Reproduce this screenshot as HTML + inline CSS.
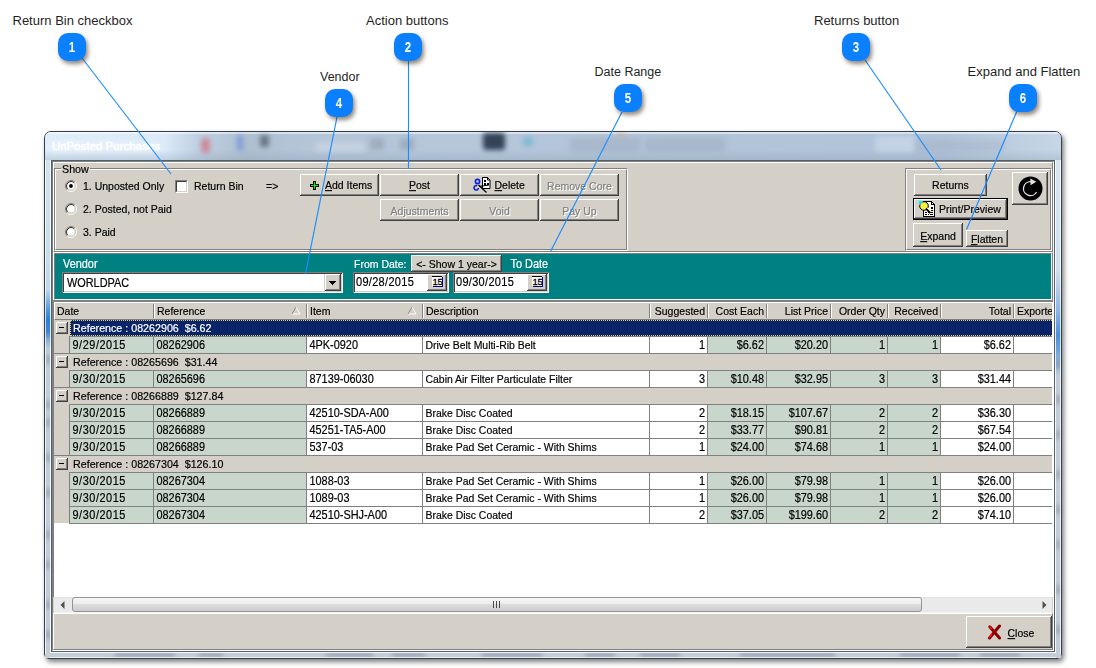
<!DOCTYPE html><html><head><meta charset="utf-8"><style>
html,body{margin:0;padding:0}
body{width:1096px;height:668px;background:#fff;position:relative;overflow:hidden;font-family:"Liberation Sans",sans-serif}
div,svg{position:absolute;box-sizing:border-box}
.t{white-space:pre}
.s{-webkit-text-stroke:0.18px currentColor}
</style></head><body>
<div style="left:44px;top:131px;width:1018px;height:528px;border-radius:7px 7px 5px 5px;box-shadow:2px 3px 5px rgba(0,0,0,0.5)"></div>
<div style="left:44px;top:131px;width:1018px;height:528px;border:1px solid #36404a;border-radius:7px 7px 5px 5px;background:linear-gradient(180deg,#d6e4f2 0px,#bdd0e4 28px,#c8d9ea 200px,#c4d6e8 100%);overflow:hidden"></div>
<div style="left:45px;top:160px;width:6px;height:493px;background:linear-gradient(180deg,#d2e2f0 0px,#c8dcea 100px,#c0d6ea 130px,#5a9ee0 148px,#2a80d8 160px,#3a88d8 172px,#8ab0d8 180px,#c0cedc 190px,#c2ccd6 100%)"></div>
<div style="left:1055px;top:160px;width:6px;height:493px;background:linear-gradient(180deg,#d8e6f2 0px,#d0e0ee 110px,#b8d0e8 125px,#8ab8e8 150px,#4a90dc 175px,#6aa4dc 190px,#c0ccd8 215px,#c2ccd6 100%)"></div>
<div style="left:45px;top:652px;width:1016px;height:6px;background:#c4ced8"></div>
<div style="left:46px;top:355px;width:4px;height:9px;background:rgba(80,95,110,0.4);filter:blur(2px)"></div>
<div style="left:46px;top:400px;width:4px;height:9px;background:rgba(80,95,110,0.4);filter:blur(2px)"></div>
<div style="left:46px;top:418px;width:4px;height:9px;background:rgba(80,95,110,0.4);filter:blur(2px)"></div>
<div style="left:46px;top:453px;width:4px;height:9px;background:rgba(80,95,110,0.4);filter:blur(2px)"></div>
<div style="left:46px;top:488px;width:4px;height:9px;background:rgba(80,95,110,0.4);filter:blur(2px)"></div>
<div style="left:46px;top:530px;width:4px;height:9px;background:rgba(80,95,110,0.4);filter:blur(2px)"></div>
<div style="left:46px;top:560px;width:4px;height:9px;background:rgba(80,95,110,0.4);filter:blur(2px)"></div>
<div style="left:46px;top:600px;width:4px;height:9px;background:rgba(80,95,110,0.4);filter:blur(2px)"></div>
<div style="left:46px;top:630px;width:4px;height:9px;background:rgba(80,95,110,0.4);filter:blur(2px)"></div>
<div style="left:1056px;top:360px;width:4px;height:9px;background:rgba(80,95,110,0.38);filter:blur(2px)"></div>
<div style="left:1056px;top:395px;width:4px;height:9px;background:rgba(80,95,110,0.38);filter:blur(2px)"></div>
<div style="left:1056px;top:430px;width:4px;height:9px;background:rgba(80,95,110,0.38);filter:blur(2px)"></div>
<div style="left:1056px;top:470px;width:4px;height:9px;background:rgba(80,95,110,0.38);filter:blur(2px)"></div>
<div style="left:1056px;top:505px;width:4px;height:9px;background:rgba(80,95,110,0.38);filter:blur(2px)"></div>
<div style="left:1056px;top:540px;width:4px;height:9px;background:rgba(80,95,110,0.38);filter:blur(2px)"></div>
<div style="left:1056px;top:585px;width:4px;height:9px;background:rgba(80,95,110,0.38);filter:blur(2px)"></div>
<div style="left:1056px;top:625px;width:4px;height:9px;background:rgba(80,95,110,0.38);filter:blur(2px)"></div>
<div style="left:115px;top:653px;width:60px;height:4px;background:rgba(80,95,110,0.38);filter:blur(2px)"></div>
<div style="left:199px;top:653px;width:24px;height:4px;background:rgba(80,95,110,0.38);filter:blur(2px)"></div>
<div style="left:326px;top:653px;width:47px;height:4px;background:rgba(80,95,110,0.38);filter:blur(2px)"></div>
<div style="left:392px;top:653px;width:33px;height:4px;background:rgba(80,95,110,0.38);filter:blur(2px)"></div>
<div style="left:482px;top:653px;width:60px;height:4px;background:rgba(80,95,110,0.38);filter:blur(2px)"></div>
<div style="left:585px;top:653px;width:30px;height:4px;background:rgba(80,95,110,0.38);filter:blur(2px)"></div>
<div style="left:640px;top:653px;width:40px;height:4px;background:rgba(80,95,110,0.38);filter:blur(2px)"></div>
<div style="left:740px;top:653px;width:95px;height:4px;background:rgba(80,95,110,0.38);filter:blur(2px)"></div>
<div style="left:900px;top:653px;width:60px;height:4px;background:rgba(80,95,110,0.38);filter:blur(2px)"></div>
<div style="left:980px;top:653px;width:40px;height:4px;background:rgba(80,95,110,0.38);filter:blur(2px)"></div>
<div style="left:45px;top:138px;width:1px;height:516px;background:rgba(255,255,255,0.75)"></div>
<div style="left:1060px;top:138px;width:1px;height:516px;background:rgba(255,255,255,0.75)"></div>
<div style="left:50px;top:159px;width:1px;height:494px;background:rgba(255,255,255,0.85)"></div>
<div style="left:1055px;top:159px;width:1px;height:494px;background:rgba(255,255,255,0.85)"></div>
<div style="left:50px;top:652px;width:1006px;height:1px;background:rgba(255,255,255,0.85)"></div>
<div style="left:49px;top:657px;width:1007px;height:1px;background:rgba(255,255,255,0.7)"></div>
<div style="left:45px;top:132px;width:1016px;height:28px;overflow:hidden;border-radius:6px 6px 0 0">
<div style="left:0;top:0;width:1016px;height:28px;background:linear-gradient(90deg,#e0edfb 0px,#dbe9f8 120px,#c0d2e4 150px,#aebfd0 200px,#b4c5d8 260px,#b6c7da 420px,#b2c4d8 600px,#b0c3d8 900px,#c6d6e6 1016px)"></div>
<div style="left:0;top:0;width:1016px;height:2px;background:rgba(255,255,255,0.5)"></div>
<div style="left:0;top:18px;width:1016px;height:10px;background:linear-gradient(180deg,rgba(140,160,180,0) 0%,rgba(140,160,180,0.35) 100%)"></div>
<div style="left:156px;top:6px;width:9px;height:15px;background:rgba(215,95,110,0.6);filter:blur(2.5px);border-radius:3px"></div>
<div style="left:192px;top:3px;width:6px;height:16px;background:rgba(110,140,225,0.7);filter:blur(2.5px);border-radius:3px"></div>
<div style="left:215px;top:3px;width:9px;height:12px;background:rgba(70,85,100,0.7);filter:blur(2.5px);border-radius:3px"></div>
<div style="left:270px;top:10px;width:50px;height:10px;background:rgba(225,232,240,0.35);filter:blur(2.5px);border-radius:3px"></div>
<div style="left:325px;top:6px;width:14px;height:12px;background:rgba(130,145,160,0.45);filter:blur(2.5px);border-radius:3px"></div>
<div style="left:355px;top:6px;width:14px;height:12px;background:rgba(130,145,160,0.45);filter:blur(2.5px);border-radius:3px"></div>
<div style="left:438px;top:1px;width:22px;height:17px;background:rgba(45,60,80,0.95);filter:blur(2.5px);border-radius:3px"></div>
<div style="left:478px;top:5px;width:10px;height:9px;background:rgba(90,175,205,0.6);filter:blur(2.5px);border-radius:3px"></div>
<div style="left:525px;top:6px;width:70px;height:14px;background:rgba(150,160,180,0.35);filter:blur(2.5px);border-radius:3px"></div>
<div style="left:572px;top:0px;width:8px;height:4px;background:rgba(235,150,60,0.45);filter:blur(2.5px);border-radius:3px"></div>
<div style="left:600px;top:6px;width:80px;height:14px;background:rgba(150,160,180,0.35);filter:blur(2.5px);border-radius:3px"></div>
<div style="left:830px;top:4px;width:40px;height:16px;background:rgba(215,228,242,0.5);filter:blur(2.5px);border-radius:3px"></div>
<div style="left:870px;top:8px;width:90px;height:12px;background:rgba(160,170,190,0.3);filter:blur(2.5px);border-radius:3px"></div>
<div class="t" style="left:7px;top:5px;font-size:11.5px;line-height:18px;color:#fff;-webkit-text-stroke:0.4px #fff;text-shadow:0 0 6px #fff,0 0 10px #fff;filter:blur(0.45px)">UnPosted Purchases</div>
</div>
<div style="left:51px;top:160px;width:1004px;height:492px;border:1px solid #56606a;background:#D4D0C8"></div>
<div style="left:52px;top:161px;width:1002px;height:490px;border-top:1px solid #808080;border-left:1px solid #808080;border-right:1px solid #fff;border-bottom:1px solid #fff;background:#D4D0C8"></div>
<div style="left:53px;top:162px;width:1000px;height:90px;border-top:1px solid #fff;border-left:1px solid #fff;border-bottom:1px solid #808080;border-right:1px solid #808080;background:#D4D0C8"></div>
<div style="left:54px;top:168px;width:574px;height:83px;border-top:1px solid #808080;border-left:1px solid #808080;border-right:1px solid #fff;border-bottom:1px solid #fff"></div>
<div style="left:55px;top:169px;width:572px;height:81px;border-top:1px solid #fff;border-left:1px solid #fff;border-right:1px solid #808080;border-bottom:1px solid #808080"></div>
<div style="left:61px;top:164px;width:29px;height:8px;background:#D4D0C8"></div>
<div class="t s" style="left:62px;top:163.29px;font-size:10.7px;line-height:13px;color:#000;transform:scaleY(1.1);transform-origin:0 10.21px;">Show</div>
<svg style="left:65px;top:180px" width="12" height="12" viewBox="0 0 12 12"><circle cx="6" cy="6" r="3.6" fill="#fff"/><path d="M2.11 9.89 A5.5 5.5 0 0 1 9.89 2.11" stroke="#808080" stroke-width="1" fill="none"/><path d="M9.89 2.11 A5.5 5.5 0 0 1 2.11 9.89" stroke="#fff" stroke-width="1" fill="none"/><path d="M2.82 9.18 A4.5 4.5 0 0 1 9.18 2.82" stroke="#404040" stroke-width="1" fill="none"/><path d="M9.18 2.82 A4.5 4.5 0 0 1 2.82 9.18" stroke="#D4D0C8" stroke-width="1" fill="none"/><circle cx="6" cy="6" r="1.9" fill="#000"/></svg>
<svg style="left:65px;top:203px" width="12" height="12" viewBox="0 0 12 12"><circle cx="6" cy="6" r="3.6" fill="#fff"/><path d="M2.11 9.89 A5.5 5.5 0 0 1 9.89 2.11" stroke="#808080" stroke-width="1" fill="none"/><path d="M9.89 2.11 A5.5 5.5 0 0 1 2.11 9.89" stroke="#fff" stroke-width="1" fill="none"/><path d="M2.82 9.18 A4.5 4.5 0 0 1 9.18 2.82" stroke="#404040" stroke-width="1" fill="none"/><path d="M9.18 2.82 A4.5 4.5 0 0 1 2.82 9.18" stroke="#D4D0C8" stroke-width="1" fill="none"/></svg>
<svg style="left:65px;top:226px" width="12" height="12" viewBox="0 0 12 12"><circle cx="6" cy="6" r="3.6" fill="#fff"/><path d="M2.11 9.89 A5.5 5.5 0 0 1 9.89 2.11" stroke="#808080" stroke-width="1" fill="none"/><path d="M9.89 2.11 A5.5 5.5 0 0 1 2.11 9.89" stroke="#fff" stroke-width="1" fill="none"/><path d="M2.82 9.18 A4.5 4.5 0 0 1 9.18 2.82" stroke="#404040" stroke-width="1" fill="none"/><path d="M9.18 2.82 A4.5 4.5 0 0 1 2.82 9.18" stroke="#D4D0C8" stroke-width="1" fill="none"/></svg>
<div class="t s" style="left:83px;top:180.36px;font-size:10.5px;line-height:13px;color:#000;transform:scaleY(1.1);transform-origin:0 10.14px;">1. Unposted Only</div>
<div class="t s" style="left:83px;top:203.36px;font-size:10.5px;line-height:13px;color:#000;transform:scaleY(1.1);transform-origin:0 10.14px;">2. Posted, not Paid</div>
<div class="t s" style="left:83px;top:226.36px;font-size:10.5px;line-height:13px;color:#000;transform:scaleY(1.1);transform-origin:0 10.14px;">3. Paid</div>
<div style="left:175px;top:180px;width:13px;height:13px;background:#fff;border-style:solid;border-width:1px;border-color:#808080 #fff #fff #808080"></div>
<div style="left:176px;top:181px;width:11px;height:11px;border-style:solid;border-width:1px;border-color:#404040 #D4D0C8 #D4D0C8 #404040"></div>
<div class="t s" style="left:194px;top:180.36px;font-size:10.5px;line-height:13px;color:#000;transform:scaleY(1.1);transform-origin:0 10.14px;">Return Bin</div>
<div class="t s" style="left:266px;top:180.36px;font-size:10.5px;line-height:13px;color:#000;transform:scaleY(1.1);transform-origin:0 10.14px;">=&gt;</div>
<div style="left:300px;top:174px;width:79px;height:22px;background:#D4D0C8;box-shadow:inset -1px -1px #404040,inset 1px 1px #fff,inset -2px -2px #808080;"></div>
<div class="t s" style="left:325px;top:179.36px;font-size:10.5px;line-height:13px;color:#000;transform:scaleY(1.1);transform-origin:0 10.14px;"><u>A</u>dd Items</div>
<svg style="left:310px;top:181px" width="9" height="9" viewBox="0 0 9 9" shape-rendering="crispEdges"><path d="M3 0h3v3h3v3h-3v3h-3v-3h-3v-3h3z" fill="#000"/><path d="M4 1h1v3h3v1h-3v3h-1v-3h-3v-1h3z" fill="#00f000"/></svg>
<div style="left:380px;top:174px;width:79px;height:22px;background:#D4D0C8;box-shadow:inset -1px -1px #404040,inset 1px 1px #fff,inset -2px -2px #808080;"></div>
<div class="t s" style="left:269.5px;width:300px;text-align:center;top:179.36px;font-size:10.5px;line-height:13px;color:#000;transform:scaleY(1.1);transform-origin:0 10.14px;"><u>P</u>ost</div>
<div style="left:460px;top:174px;width:79px;height:22px;background:#D4D0C8;box-shadow:inset -1px -1px #404040,inset 1px 1px #fff,inset -2px -2px #808080;"></div>
<div class="t s" style="left:494.5px;top:179.36px;font-size:10.5px;line-height:13px;color:#000;transform:scaleY(1.1);transform-origin:0 10.14px;"><u>D</u>elete</div>
<svg style="left:472px;top:176px" width="20" height="18" viewBox="0 0 20 18"><path d="M10.5 1.5h5l2.5 2.5v8.5h-7.5z" fill="#fff" stroke="#000" stroke-width="1"/><path d="M15.5 1.5v2.5h2.5" fill="none" stroke="#000" stroke-width="1"/><path d="M12 4h2v2h-2zM12 7h2v2h-2zM15 7h2v2h-2z" fill="#000"/><circle cx="5.5" cy="5.5" r="2.1" fill="none" stroke="#0a20e0" stroke-width="1.6"/><path d="M5.2 9.8 a2.2 2.2 0 1 0 1.2 2.2" fill="none" stroke="#0a20e0" stroke-width="1.6"/><path d="M6.5 9l8 7.5M7 10.5l10-1.5" stroke="#000" stroke-width="1.2"/></svg>
<div style="left:540px;top:174px;width:79px;height:22px;background:#D4D0C8;box-shadow:inset -1px -1px #404040,inset 1px 1px #fff,inset -2px -2px #808080;"></div>
<div class="t s" style="left:430.5px;width:300px;text-align:center;top:180.86px;font-size:10.5px;line-height:13px;color:#fff;transform:scaleY(1.1);transform-origin:0 10.14px;">Remove Core</div>
<div class="t s" style="left:429.5px;width:300px;text-align:center;top:179.86px;font-size:10.5px;line-height:13px;color:#808080;transform:scaleY(1.1);transform-origin:0 10.14px;">Remove Core</div>
<div style="left:380px;top:199px;width:79px;height:22px;background:#D4D0C8;box-shadow:inset -1px -1px #404040,inset 1px 1px #fff,inset -2px -2px #808080;"></div>
<div class="t s" style="left:270.5px;width:300px;text-align:center;top:205.86px;font-size:10.5px;line-height:13px;color:#fff;transform:scaleY(1.1);transform-origin:0 10.14px;">Adjustments</div>
<div class="t s" style="left:269.5px;width:300px;text-align:center;top:204.86px;font-size:10.5px;line-height:13px;color:#808080;transform:scaleY(1.1);transform-origin:0 10.14px;">Adjustments</div>
<div style="left:460px;top:199px;width:79px;height:22px;background:#D4D0C8;box-shadow:inset -1px -1px #404040,inset 1px 1px #fff,inset -2px -2px #808080;"></div>
<div class="t s" style="left:350.5px;width:300px;text-align:center;top:205.86px;font-size:10.5px;line-height:13px;color:#fff;transform:scaleY(1.1);transform-origin:0 10.14px;">Void</div>
<div class="t s" style="left:349.5px;width:300px;text-align:center;top:204.86px;font-size:10.5px;line-height:13px;color:#808080;transform:scaleY(1.1);transform-origin:0 10.14px;">Void</div>
<div style="left:540px;top:199px;width:79px;height:22px;background:#D4D0C8;box-shadow:inset -1px -1px #404040,inset 1px 1px #fff,inset -2px -2px #808080;"></div>
<div class="t s" style="left:430.5px;width:300px;text-align:center;top:205.86px;font-size:10.5px;line-height:13px;color:#fff;transform:scaleY(1.1);transform-origin:0 10.14px;">Pay Up</div>
<div class="t s" style="left:429.5px;width:300px;text-align:center;top:204.86px;font-size:10.5px;line-height:13px;color:#808080;transform:scaleY(1.1);transform-origin:0 10.14px;">Pay Up</div>
<div style="left:905px;top:168px;width:147px;height:83px;border-top:1px solid #808080;border-left:1px solid #808080;border-right:1px solid #fff;border-bottom:1px solid #fff"></div>
<div style="left:906px;top:169px;width:145px;height:81px;border-top:1px solid #fff;border-left:1px solid #fff;border-right:1px solid #808080;border-bottom:1px solid #808080"></div>
<div style="left:914px;top:174px;width:73px;height:22px;background:#D4D0C8;box-shadow:inset -1px -1px #404040,inset 1px 1px #fff,inset -2px -2px #808080;"></div>
<div class="t s" style="left:800.5px;width:300px;text-align:center;top:179.36px;font-size:10.5px;line-height:13px;color:#000;transform:scaleY(1.1);transform-origin:0 10.14px;">Returns</div>
<div style="left:913px;top:198px;width:95px;height:22px;background:#D4D0C8;box-shadow:inset -1px -1px #000,inset 1px 1px #000,inset -2px -2px #404040,inset 2px 2px #fff,inset -3px -3px #808080;"></div>
<div class="t s" style="left:939px;top:203.36px;font-size:10.5px;line-height:13px;color:#000;transform:scaleY(1.1);transform-origin:0 10.14px;">Print/Preview</div>
<svg style="left:919px;top:201px" width="17" height="16" viewBox="0 0 17 16" shape-rendering="crispEdges"><path d="M4.5 0.5H12.5L15.5 3.5V15.5H4.5Z" fill="#fff" stroke="#000" stroke-width="1"/><path d="M12.5 0.5V3.5H15.5" fill="none" stroke="#000"/><path d="M6 11h2v1h-2zM9 11h2v1h-2zM12 11h2v1h-2zM6 13h2v1h-2zM9 13h1v1h-1zM11 13h3v1h-3zM12 6h2v2h-2zM12 9h2v1h-2z" fill="#000"/></svg>
<svg style="left:919px;top:201px" width="17" height="16" viewBox="0 0 17 16"><circle cx="5" cy="5" r="4.3" fill="#f6f040" stroke="#000" stroke-width="1"/><path d="M0 0H4.5L0 4.5Z" fill="#00f0ff"/><path d="M7 7.5L11.5 12" stroke="#000" stroke-width="2.2"/><path d="M7.5 6.5L12 11" stroke="#f0e020" stroke-width="1"/></svg>
<div style="left:913px;top:223px;width:50px;height:24px;background:#D4D0C8;box-shadow:inset -1px -1px #404040,inset 1px 1px #fff,inset -2px -2px #808080;"></div>
<div class="t s" style="left:788px;width:300px;text-align:center;top:229.86px;font-size:10.5px;line-height:13px;color:#000;transform:scaleY(1.1);transform-origin:0 10.14px;"><u>E</u>xpand</div>
<div style="left:966px;top:230px;width:42px;height:17px;background:#D4D0C8;box-shadow:inset -1px -1px #404040,inset 1px 1px #fff,inset -2px -2px #808080;"></div>
<div class="t s" style="left:837px;width:300px;text-align:center;top:233.36px;font-size:10.5px;line-height:13px;color:#000;transform:scaleY(1.1);transform-origin:0 10.14px;"><u>F</u>latten</div>
<div style="left:1012px;top:172px;width:36px;height:33px;background:#D4D0C8;box-shadow:inset -1px -1px #404040,inset 1px 1px #fff,inset -2px -2px #808080;"></div>
<svg style="left:1018px;top:176px" width="25" height="25" viewBox="0 0 25 25"><circle cx="12.5" cy="12.5" r="12" fill="#000"/><path d="M13 5.6 A7 7 0 1 0 18.6 16" stroke="#e8e8e8" stroke-width="1.3" fill="none"/><path d="M12.3 2.6 L18.3 5.8 L12.6 9.2 Z" fill="#e0e0e0"/></svg>
<div style="left:53px;top:252px;width:1000px;height:49px;border-top:1px solid #fff;border-left:1px solid #fff;border-bottom:1px solid #808080;border-right:1px solid #808080;background:#008080"></div>
<div style="left:54px;top:253px;width:998px;height:47px;border-top:1px solid #808080;border-left:1px solid #808080;border-bottom:1px solid #fff;border-right:1px solid #fff;background:#008080"></div>
<div class="t s" style="left:63px;top:256.72px;font-size:10.9px;line-height:14px;color:#fff;transform:scaleY(1.1);transform-origin:0 10.78px;">Vendor</div>
<div style="left:62px;top:272px;width:281px;height:21px;background:#fff;box-shadow:inset 1px 1px #808080,inset -1px -1px #fff,inset 2px 2px #404040,inset -2px -2px #D4D0C8;"></div>
<div class="t s" style="left:67px;top:275.72px;font-size:10.9px;line-height:14px;color:#000;transform:scaleY(1.1);transform-origin:0 10.78px;">WORLDPAC</div>
<div style="left:324px;top:274px;width:17px;height:17px;background:#D4D0C8"></div>
<div style="left:325px;top:274px;width:16px;height:17px;background:#D4D0C8;box-shadow:inset -1px -1px #404040,inset 1px 1px #fff,inset -2px -2px #808080;"></div>
<svg style="left:329px;top:281px" width="8" height="4" shape-rendering="crispEdges"><path d="M0 0h7v1h-1v1h-1v1h-1v1h-1v-1h-1v-1h-1v-1h-1z" fill="#000"/></svg>
<div class="t s" style="left:354px;top:257.86px;font-size:10.5px;line-height:13px;color:#fff;transform:scaleY(1.1);transform-origin:0 10.14px;">From Date:</div>
<div style="left:411px;top:255px;width:91px;height:17px;background:#D4D0C8;box-shadow:inset -1px -1px #404040,inset 1px 1px #fff,inset -2px -2px #808080;"></div>
<div class="t s" style="left:306.5px;width:300px;text-align:center;top:258.06px;font-size:10.5px;line-height:13px;color:#000;transform:scaleY(1.1);transform-origin:0 10.14px;">&lt;- Show 1 year-&gt;</div>
<div class="t s" style="left:510.5px;top:256.72px;font-size:10.9px;line-height:14px;color:#fff;transform:scaleY(1.1);transform-origin:0 10.78px;">To Date</div>
<div style="left:353px;top:272px;width:96px;height:21px;background:#fff;box-shadow:inset 1px 1px #808080,inset -1px -1px #fff,inset 2px 2px #404040,inset -2px -2px #D4D0C8;"></div>
<div class="t s" style="left:356px;top:275.19px;font-size:11px;line-height:14px;color:#000;transform:scaleY(1.1);transform-origin:0 10.81px;letter-spacing:0.3px;">09/28/2015</div>
<div style="left:427px;top:274px;width:20px;height:17px;background:#D4D0C8;box-shadow:inset -1px -1px #404040,inset 1px 1px #fff,inset -2px -2px #808080;"></div>
<div style="left:432px;top:276px;width:10px;height:1px;background:#000"></div>
<div style="left:432px;top:277px;width:10px;height:9px;background:#fff"></div>
<div style="left:442px;top:277px;width:1px;height:10px;background:#0000a0"></div>
<div style="left:433px;top:286px;width:9px;height:1px;background:repeating-linear-gradient(90deg,#0000a0 0 2px,#000 2px 3px)"></div>
<div class="t" style="left:432.5px;top:276.5px;font-size:9.5px;line-height:10px;letter-spacing:-0.3px;-webkit-text-stroke:0.3px #000;color:#000">15</div>
<div style="left:453px;top:272px;width:96px;height:21px;background:#fff;box-shadow:inset 1px 1px #808080,inset -1px -1px #fff,inset 2px 2px #404040,inset -2px -2px #D4D0C8;"></div>
<div class="t s" style="left:456px;top:275.19px;font-size:11px;line-height:14px;color:#000;transform:scaleY(1.1);transform-origin:0 10.81px;letter-spacing:0.3px;">09/30/2015</div>
<div style="left:527px;top:274px;width:20px;height:17px;background:#D4D0C8;box-shadow:inset -1px -1px #404040,inset 1px 1px #fff,inset -2px -2px #808080;"></div>
<div style="left:532px;top:276px;width:10px;height:1px;background:#000"></div>
<div style="left:532px;top:277px;width:10px;height:9px;background:#fff"></div>
<div style="left:542px;top:277px;width:1px;height:10px;background:#0000a0"></div>
<div style="left:533px;top:286px;width:9px;height:1px;background:repeating-linear-gradient(90deg,#0000a0 0 2px,#000 2px 3px)"></div>
<div class="t" style="left:532.5px;top:276.5px;font-size:9.5px;line-height:10px;letter-spacing:-0.3px;-webkit-text-stroke:0.3px #000;color:#000">15</div>
<div style="left:0;top:0;width:1096px;height:668px;clip-path:inset(300px 43px 71px 53px)">
<div style="left:53px;top:301px;width:1000px;height:312px;background:#fff;border-top:1px solid #808080;border-left:1px solid #808080"></div>
<div style="left:53px;top:300px;width:1000px;height:1px;background:#808080"></div>
<div style="left:54px;top:302px;width:998px;height:18px;background:#D4D0C8;border-top:1px solid #fff;border-left:1px solid #fff;border-bottom:1px solid #808080"></div>
<div style="left:153px;top:304px;width:1px;height:14px;background:#808080"></div>
<div style="left:154px;top:304px;width:1px;height:14px;background:#fff"></div>
<div class="t s" style="left:57px;top:304.86px;font-size:10.5px;line-height:13px;color:#000;transform:scaleY(1.1);transform-origin:0 10.14px;">Date</div>
<div style="left:306px;top:304px;width:1px;height:14px;background:#808080"></div>
<div style="left:307px;top:304px;width:1px;height:14px;background:#fff"></div>
<div class="t s" style="left:157px;top:304.86px;font-size:10.5px;line-height:13px;color:#000;transform:scaleY(1.1);transform-origin:0 10.14px;">Reference</div>
<div style="left:422px;top:304px;width:1px;height:14px;background:#808080"></div>
<div style="left:423px;top:304px;width:1px;height:14px;background:#fff"></div>
<div class="t s" style="left:310px;top:304.86px;font-size:10.5px;line-height:13px;color:#000;transform:scaleY(1.1);transform-origin:0 10.14px;">Item</div>
<div style="left:649px;top:304px;width:1px;height:14px;background:#808080"></div>
<div style="left:650px;top:304px;width:1px;height:14px;background:#fff"></div>
<div class="t s" style="left:426px;top:304.86px;font-size:10.5px;line-height:13px;color:#000;transform:scaleY(1.1);transform-origin:0 10.14px;">Description</div>
<div style="left:707px;top:304px;width:1px;height:14px;background:#808080"></div>
<div style="left:708px;top:304px;width:1px;height:14px;background:#fff"></div>
<div class="t s" style="right:391px;top:304.86px;font-size:10.5px;line-height:13px;color:#000;transform:scaleY(1.1);transform-origin:0 10.14px;">Suggested</div>
<div style="left:766px;top:304px;width:1px;height:14px;background:#808080"></div>
<div style="left:767px;top:304px;width:1px;height:14px;background:#fff"></div>
<div class="t s" style="right:332px;top:304.86px;font-size:10.5px;line-height:13px;color:#000;transform:scaleY(1.1);transform-origin:0 10.14px;">Cost Each</div>
<div style="left:830px;top:304px;width:1px;height:14px;background:#808080"></div>
<div style="left:831px;top:304px;width:1px;height:14px;background:#fff"></div>
<div class="t s" style="right:268px;top:304.86px;font-size:10.5px;line-height:13px;color:#000;transform:scaleY(1.1);transform-origin:0 10.14px;">List Price</div>
<div style="left:887px;top:304px;width:1px;height:14px;background:#808080"></div>
<div style="left:888px;top:304px;width:1px;height:14px;background:#fff"></div>
<div class="t s" style="right:211px;top:304.86px;font-size:10.5px;line-height:13px;color:#000;transform:scaleY(1.1);transform-origin:0 10.14px;">Order Qty</div>
<div style="left:940px;top:304px;width:1px;height:14px;background:#808080"></div>
<div style="left:941px;top:304px;width:1px;height:14px;background:#fff"></div>
<div class="t s" style="right:158px;top:304.86px;font-size:10.5px;line-height:13px;color:#000;transform:scaleY(1.1);transform-origin:0 10.14px;">Received</div>
<div style="left:1013px;top:304px;width:1px;height:14px;background:#808080"></div>
<div style="left:1014px;top:304px;width:1px;height:14px;background:#fff"></div>
<div class="t s" style="right:85px;top:304.86px;font-size:10.5px;line-height:13px;color:#000;transform:scaleY(1.1);transform-origin:0 10.14px;">Total</div>
<div class="t s" style="left:1017px;top:304.86px;font-size:10.5px;line-height:13px;color:#000;transform:scaleY(1.1);transform-origin:0 10.14px;">Exported</div>
<svg style="left:291px;top:306px" width="10" height="9"><path d="M5 1L9 8H1z" fill="none" stroke="#fff" stroke-width="1"/><path d="M5 1L1 8" stroke="#808080" stroke-width="1"/></svg>
<svg style="left:407px;top:306px" width="10" height="9"><path d="M5 1L9 8H1z" fill="none" stroke="#fff" stroke-width="1"/><path d="M5 1L1 8" stroke="#808080" stroke-width="1"/></svg>
<div style="left:1052px;top:302px;width:1px;height:18px;background:#fff"></div>
<div style="left:54px;top:320px;width:998px;height:16px;background:#D4D0C8"></div>
<div style="left:70px;top:320px;width:982px;height:16px;background:#0A246A"></div>
<div style="left:70px;top:320px;width:992px;height:16px;border:1px dotted #e8d070"></div>
<div style="left:56px;top:322px;width:12px;height:12px;background:#D4D0C8;box-shadow:inset -1px -1px #404040,inset 1px 1px #fff,inset -2px -2px #808080;"></div>
<div style="left:59px;top:327px;width:5px;height:1px;background:#000"></div>
<div class="t s" style="left:73px;top:321.79px;font-size:10.7px;line-height:13px;color:#fff;transform:scaleY(1.1);transform-origin:0 10.21px;">Reference : 08262906  $6.62</div>
<div style="left:69px;top:336px;width:983px;height:1px;background:#808080"></div>
<div style="left:54px;top:336px;width:15px;height:1px;background:#D4D0C8"></div>
<div style="left:54px;top:337px;width:15px;height:17px;background:#D4D0C8"></div>
<div style="left:69px;top:337px;width:1px;height:16px;background:#808080"></div>
<div style="left:70px;top:337px;width:83px;height:16px;background:#C9D6CB"></div>
<div style="left:153px;top:337px;width:1px;height:17px;background:#808080"></div>
<div class="t s" style="left:72.5px;top:338.22px;font-size:10.9px;line-height:14px;color:#000;transform:scaleY(1.1);transform-origin:0 10.78px;letter-spacing:0.55px;">9/29/2015</div>
<div style="left:154px;top:337px;width:152px;height:16px;background:#C9D6CB"></div>
<div style="left:306px;top:337px;width:1px;height:17px;background:#808080"></div>
<div class="t s" style="left:156.5px;top:338.22px;font-size:10.9px;line-height:14px;color:#000;transform:scaleY(1.1);transform-origin:0 10.78px;">08262906</div>
<div style="left:307px;top:337px;width:115px;height:16px;background:#fff"></div>
<div style="left:422px;top:337px;width:1px;height:17px;background:#808080"></div>
<div class="t s" style="left:309.5px;top:338.22px;font-size:10.9px;line-height:14px;color:#000;transform:scaleY(1.1);transform-origin:0 10.78px;">4PK-0920</div>
<div style="left:423px;top:337px;width:226px;height:16px;background:#fff"></div>
<div style="left:649px;top:337px;width:1px;height:17px;background:#808080"></div>
<div class="t s" style="left:425.5px;top:338.88px;font-size:10.45px;line-height:13px;color:#000;transform:scaleY(1.1);transform-origin:0 10.12px;">Drive Belt Multi-Rib Belt</div>
<div style="left:650px;top:337px;width:57px;height:16px;background:#fff"></div>
<div style="left:707px;top:337px;width:1px;height:17px;background:#808080"></div>
<div class="t s" style="right:391px;top:338.22px;font-size:10.9px;line-height:14px;color:#000;transform:scaleY(1.1);transform-origin:0 10.78px;">1</div>
<div style="left:708px;top:337px;width:58px;height:16px;background:#C9D6CB"></div>
<div style="left:766px;top:337px;width:1px;height:17px;background:#808080"></div>
<div class="t s" style="right:332px;top:338.22px;font-size:10.9px;line-height:14px;color:#000;transform:scaleY(1.1);transform-origin:0 10.78px;">$6.62</div>
<div style="left:767px;top:337px;width:63px;height:16px;background:#C9D6CB"></div>
<div style="left:830px;top:337px;width:1px;height:17px;background:#808080"></div>
<div class="t s" style="right:268px;top:338.22px;font-size:10.9px;line-height:14px;color:#000;transform:scaleY(1.1);transform-origin:0 10.78px;">$20.20</div>
<div style="left:831px;top:337px;width:56px;height:16px;background:#C9D6CB"></div>
<div style="left:887px;top:337px;width:1px;height:17px;background:#808080"></div>
<div class="t s" style="right:211px;top:338.22px;font-size:10.9px;line-height:14px;color:#000;transform:scaleY(1.1);transform-origin:0 10.78px;">1</div>
<div style="left:888px;top:337px;width:52px;height:16px;background:#C9D6CB"></div>
<div style="left:940px;top:337px;width:1px;height:17px;background:#808080"></div>
<div class="t s" style="right:158px;top:338.22px;font-size:10.9px;line-height:14px;color:#000;transform:scaleY(1.1);transform-origin:0 10.78px;">1</div>
<div style="left:941px;top:337px;width:72px;height:16px;background:#fff"></div>
<div style="left:1013px;top:337px;width:1px;height:17px;background:#808080"></div>
<div class="t s" style="right:85px;top:338.22px;font-size:10.9px;line-height:14px;color:#000;transform:scaleY(1.1);transform-origin:0 10.78px;">$6.62</div>
<div style="left:1014px;top:337px;width:38px;height:16px;background:#fff"></div>
<div style="left:54px;top:353px;width:998px;height:1px;background:#808080"></div>
<div style="left:54px;top:354px;width:998px;height:16px;background:#D4D0C8"></div>
<div style="left:56px;top:356px;width:12px;height:12px;background:#D4D0C8;box-shadow:inset -1px -1px #404040,inset 1px 1px #fff,inset -2px -2px #808080;"></div>
<div style="left:59px;top:361px;width:5px;height:1px;background:#000"></div>
<div class="t s" style="left:73px;top:355.79px;font-size:10.7px;line-height:13px;color:#000;transform:scaleY(1.1);transform-origin:0 10.21px;">Reference : 08265696  $31.44</div>
<div style="left:69px;top:370px;width:983px;height:1px;background:#808080"></div>
<div style="left:54px;top:370px;width:15px;height:1px;background:#D4D0C8"></div>
<div style="left:54px;top:371px;width:15px;height:17px;background:#D4D0C8"></div>
<div style="left:69px;top:371px;width:1px;height:16px;background:#808080"></div>
<div style="left:70px;top:371px;width:83px;height:16px;background:#C9D6CB"></div>
<div style="left:153px;top:371px;width:1px;height:17px;background:#808080"></div>
<div class="t s" style="left:72.5px;top:372.22px;font-size:10.9px;line-height:14px;color:#000;transform:scaleY(1.1);transform-origin:0 10.78px;letter-spacing:0.55px;">9/30/2015</div>
<div style="left:154px;top:371px;width:152px;height:16px;background:#C9D6CB"></div>
<div style="left:306px;top:371px;width:1px;height:17px;background:#808080"></div>
<div class="t s" style="left:156.5px;top:372.22px;font-size:10.9px;line-height:14px;color:#000;transform:scaleY(1.1);transform-origin:0 10.78px;">08265696</div>
<div style="left:307px;top:371px;width:115px;height:16px;background:#fff"></div>
<div style="left:422px;top:371px;width:1px;height:17px;background:#808080"></div>
<div class="t s" style="left:309.5px;top:372.22px;font-size:10.9px;line-height:14px;color:#000;transform:scaleY(1.1);transform-origin:0 10.78px;">87139-06030</div>
<div style="left:423px;top:371px;width:226px;height:16px;background:#fff"></div>
<div style="left:649px;top:371px;width:1px;height:17px;background:#808080"></div>
<div class="t s" style="left:425.5px;top:372.88px;font-size:10.45px;line-height:13px;color:#000;transform:scaleY(1.1);transform-origin:0 10.12px;">Cabin Air Filter Particulate Filter</div>
<div style="left:650px;top:371px;width:57px;height:16px;background:#fff"></div>
<div style="left:707px;top:371px;width:1px;height:17px;background:#808080"></div>
<div class="t s" style="right:391px;top:372.22px;font-size:10.9px;line-height:14px;color:#000;transform:scaleY(1.1);transform-origin:0 10.78px;">3</div>
<div style="left:708px;top:371px;width:58px;height:16px;background:#C9D6CB"></div>
<div style="left:766px;top:371px;width:1px;height:17px;background:#808080"></div>
<div class="t s" style="right:332px;top:372.22px;font-size:10.9px;line-height:14px;color:#000;transform:scaleY(1.1);transform-origin:0 10.78px;">$10.48</div>
<div style="left:767px;top:371px;width:63px;height:16px;background:#C9D6CB"></div>
<div style="left:830px;top:371px;width:1px;height:17px;background:#808080"></div>
<div class="t s" style="right:268px;top:372.22px;font-size:10.9px;line-height:14px;color:#000;transform:scaleY(1.1);transform-origin:0 10.78px;">$32.95</div>
<div style="left:831px;top:371px;width:56px;height:16px;background:#C9D6CB"></div>
<div style="left:887px;top:371px;width:1px;height:17px;background:#808080"></div>
<div class="t s" style="right:211px;top:372.22px;font-size:10.9px;line-height:14px;color:#000;transform:scaleY(1.1);transform-origin:0 10.78px;">3</div>
<div style="left:888px;top:371px;width:52px;height:16px;background:#C9D6CB"></div>
<div style="left:940px;top:371px;width:1px;height:17px;background:#808080"></div>
<div class="t s" style="right:158px;top:372.22px;font-size:10.9px;line-height:14px;color:#000;transform:scaleY(1.1);transform-origin:0 10.78px;">3</div>
<div style="left:941px;top:371px;width:72px;height:16px;background:#fff"></div>
<div style="left:1013px;top:371px;width:1px;height:17px;background:#808080"></div>
<div class="t s" style="right:85px;top:372.22px;font-size:10.9px;line-height:14px;color:#000;transform:scaleY(1.1);transform-origin:0 10.78px;">$31.44</div>
<div style="left:1014px;top:371px;width:38px;height:16px;background:#fff"></div>
<div style="left:54px;top:387px;width:998px;height:1px;background:#808080"></div>
<div style="left:54px;top:388px;width:998px;height:16px;background:#D4D0C8"></div>
<div style="left:56px;top:390px;width:12px;height:12px;background:#D4D0C8;box-shadow:inset -1px -1px #404040,inset 1px 1px #fff,inset -2px -2px #808080;"></div>
<div style="left:59px;top:395px;width:5px;height:1px;background:#000"></div>
<div class="t s" style="left:73px;top:389.79px;font-size:10.7px;line-height:13px;color:#000;transform:scaleY(1.1);transform-origin:0 10.21px;">Reference : 08266889  $127.84</div>
<div style="left:69px;top:404px;width:983px;height:1px;background:#808080"></div>
<div style="left:54px;top:404px;width:15px;height:1px;background:#D4D0C8"></div>
<div style="left:54px;top:405px;width:15px;height:17px;background:#D4D0C8"></div>
<div style="left:69px;top:405px;width:1px;height:16px;background:#808080"></div>
<div style="left:70px;top:405px;width:83px;height:16px;background:#C9D6CB"></div>
<div style="left:153px;top:405px;width:1px;height:17px;background:#808080"></div>
<div class="t s" style="left:72.5px;top:406.22px;font-size:10.9px;line-height:14px;color:#000;transform:scaleY(1.1);transform-origin:0 10.78px;letter-spacing:0.55px;">9/30/2015</div>
<div style="left:154px;top:405px;width:152px;height:16px;background:#C9D6CB"></div>
<div style="left:306px;top:405px;width:1px;height:17px;background:#808080"></div>
<div class="t s" style="left:156.5px;top:406.22px;font-size:10.9px;line-height:14px;color:#000;transform:scaleY(1.1);transform-origin:0 10.78px;">08266889</div>
<div style="left:307px;top:405px;width:115px;height:16px;background:#fff"></div>
<div style="left:422px;top:405px;width:1px;height:17px;background:#808080"></div>
<div class="t s" style="left:309.5px;top:406.22px;font-size:10.9px;line-height:14px;color:#000;transform:scaleY(1.1);transform-origin:0 10.78px;">42510-SDA-A00</div>
<div style="left:423px;top:405px;width:226px;height:16px;background:#fff"></div>
<div style="left:649px;top:405px;width:1px;height:17px;background:#808080"></div>
<div class="t s" style="left:425.5px;top:406.88px;font-size:10.45px;line-height:13px;color:#000;transform:scaleY(1.1);transform-origin:0 10.12px;">Brake Disc Coated</div>
<div style="left:650px;top:405px;width:57px;height:16px;background:#fff"></div>
<div style="left:707px;top:405px;width:1px;height:17px;background:#808080"></div>
<div class="t s" style="right:391px;top:406.22px;font-size:10.9px;line-height:14px;color:#000;transform:scaleY(1.1);transform-origin:0 10.78px;">2</div>
<div style="left:708px;top:405px;width:58px;height:16px;background:#C9D6CB"></div>
<div style="left:766px;top:405px;width:1px;height:17px;background:#808080"></div>
<div class="t s" style="right:332px;top:406.22px;font-size:10.9px;line-height:14px;color:#000;transform:scaleY(1.1);transform-origin:0 10.78px;">$18.15</div>
<div style="left:767px;top:405px;width:63px;height:16px;background:#C9D6CB"></div>
<div style="left:830px;top:405px;width:1px;height:17px;background:#808080"></div>
<div class="t s" style="right:268px;top:406.22px;font-size:10.9px;line-height:14px;color:#000;transform:scaleY(1.1);transform-origin:0 10.78px;">$107.67</div>
<div style="left:831px;top:405px;width:56px;height:16px;background:#C9D6CB"></div>
<div style="left:887px;top:405px;width:1px;height:17px;background:#808080"></div>
<div class="t s" style="right:211px;top:406.22px;font-size:10.9px;line-height:14px;color:#000;transform:scaleY(1.1);transform-origin:0 10.78px;">2</div>
<div style="left:888px;top:405px;width:52px;height:16px;background:#C9D6CB"></div>
<div style="left:940px;top:405px;width:1px;height:17px;background:#808080"></div>
<div class="t s" style="right:158px;top:406.22px;font-size:10.9px;line-height:14px;color:#000;transform:scaleY(1.1);transform-origin:0 10.78px;">2</div>
<div style="left:941px;top:405px;width:72px;height:16px;background:#fff"></div>
<div style="left:1013px;top:405px;width:1px;height:17px;background:#808080"></div>
<div class="t s" style="right:85px;top:406.22px;font-size:10.9px;line-height:14px;color:#000;transform:scaleY(1.1);transform-origin:0 10.78px;">$36.30</div>
<div style="left:1014px;top:405px;width:38px;height:16px;background:#fff"></div>
<div style="left:69px;top:421px;width:983px;height:1px;background:#808080"></div>
<div style="left:54px;top:422px;width:15px;height:17px;background:#D4D0C8"></div>
<div style="left:69px;top:422px;width:1px;height:16px;background:#808080"></div>
<div style="left:70px;top:422px;width:83px;height:16px;background:#C9D6CB"></div>
<div style="left:153px;top:422px;width:1px;height:17px;background:#808080"></div>
<div class="t s" style="left:72.5px;top:423.22px;font-size:10.9px;line-height:14px;color:#000;transform:scaleY(1.1);transform-origin:0 10.78px;letter-spacing:0.55px;">9/30/2015</div>
<div style="left:154px;top:422px;width:152px;height:16px;background:#C9D6CB"></div>
<div style="left:306px;top:422px;width:1px;height:17px;background:#808080"></div>
<div class="t s" style="left:156.5px;top:423.22px;font-size:10.9px;line-height:14px;color:#000;transform:scaleY(1.1);transform-origin:0 10.78px;">08266889</div>
<div style="left:307px;top:422px;width:115px;height:16px;background:#fff"></div>
<div style="left:422px;top:422px;width:1px;height:17px;background:#808080"></div>
<div class="t s" style="left:309.5px;top:423.22px;font-size:10.9px;line-height:14px;color:#000;transform:scaleY(1.1);transform-origin:0 10.78px;">45251-TA5-A00</div>
<div style="left:423px;top:422px;width:226px;height:16px;background:#fff"></div>
<div style="left:649px;top:422px;width:1px;height:17px;background:#808080"></div>
<div class="t s" style="left:425.5px;top:423.88px;font-size:10.45px;line-height:13px;color:#000;transform:scaleY(1.1);transform-origin:0 10.12px;">Brake Disc Coated</div>
<div style="left:650px;top:422px;width:57px;height:16px;background:#fff"></div>
<div style="left:707px;top:422px;width:1px;height:17px;background:#808080"></div>
<div class="t s" style="right:391px;top:423.22px;font-size:10.9px;line-height:14px;color:#000;transform:scaleY(1.1);transform-origin:0 10.78px;">2</div>
<div style="left:708px;top:422px;width:58px;height:16px;background:#C9D6CB"></div>
<div style="left:766px;top:422px;width:1px;height:17px;background:#808080"></div>
<div class="t s" style="right:332px;top:423.22px;font-size:10.9px;line-height:14px;color:#000;transform:scaleY(1.1);transform-origin:0 10.78px;">$33.77</div>
<div style="left:767px;top:422px;width:63px;height:16px;background:#C9D6CB"></div>
<div style="left:830px;top:422px;width:1px;height:17px;background:#808080"></div>
<div class="t s" style="right:268px;top:423.22px;font-size:10.9px;line-height:14px;color:#000;transform:scaleY(1.1);transform-origin:0 10.78px;">$90.81</div>
<div style="left:831px;top:422px;width:56px;height:16px;background:#C9D6CB"></div>
<div style="left:887px;top:422px;width:1px;height:17px;background:#808080"></div>
<div class="t s" style="right:211px;top:423.22px;font-size:10.9px;line-height:14px;color:#000;transform:scaleY(1.1);transform-origin:0 10.78px;">2</div>
<div style="left:888px;top:422px;width:52px;height:16px;background:#C9D6CB"></div>
<div style="left:940px;top:422px;width:1px;height:17px;background:#808080"></div>
<div class="t s" style="right:158px;top:423.22px;font-size:10.9px;line-height:14px;color:#000;transform:scaleY(1.1);transform-origin:0 10.78px;">2</div>
<div style="left:941px;top:422px;width:72px;height:16px;background:#fff"></div>
<div style="left:1013px;top:422px;width:1px;height:17px;background:#808080"></div>
<div class="t s" style="right:85px;top:423.22px;font-size:10.9px;line-height:14px;color:#000;transform:scaleY(1.1);transform-origin:0 10.78px;">$67.54</div>
<div style="left:1014px;top:422px;width:38px;height:16px;background:#fff"></div>
<div style="left:69px;top:438px;width:983px;height:1px;background:#808080"></div>
<div style="left:54px;top:439px;width:15px;height:17px;background:#D4D0C8"></div>
<div style="left:69px;top:439px;width:1px;height:16px;background:#808080"></div>
<div style="left:70px;top:439px;width:83px;height:16px;background:#C9D6CB"></div>
<div style="left:153px;top:439px;width:1px;height:17px;background:#808080"></div>
<div class="t s" style="left:72.5px;top:440.22px;font-size:10.9px;line-height:14px;color:#000;transform:scaleY(1.1);transform-origin:0 10.78px;letter-spacing:0.55px;">9/30/2015</div>
<div style="left:154px;top:439px;width:152px;height:16px;background:#C9D6CB"></div>
<div style="left:306px;top:439px;width:1px;height:17px;background:#808080"></div>
<div class="t s" style="left:156.5px;top:440.22px;font-size:10.9px;line-height:14px;color:#000;transform:scaleY(1.1);transform-origin:0 10.78px;">08266889</div>
<div style="left:307px;top:439px;width:115px;height:16px;background:#fff"></div>
<div style="left:422px;top:439px;width:1px;height:17px;background:#808080"></div>
<div class="t s" style="left:309.5px;top:440.22px;font-size:10.9px;line-height:14px;color:#000;transform:scaleY(1.1);transform-origin:0 10.78px;">537-03</div>
<div style="left:423px;top:439px;width:226px;height:16px;background:#fff"></div>
<div style="left:649px;top:439px;width:1px;height:17px;background:#808080"></div>
<div class="t s" style="left:425.5px;top:440.88px;font-size:10.45px;line-height:13px;color:#000;transform:scaleY(1.1);transform-origin:0 10.12px;">Brake Pad Set Ceramic - With Shims</div>
<div style="left:650px;top:439px;width:57px;height:16px;background:#fff"></div>
<div style="left:707px;top:439px;width:1px;height:17px;background:#808080"></div>
<div class="t s" style="right:391px;top:440.22px;font-size:10.9px;line-height:14px;color:#000;transform:scaleY(1.1);transform-origin:0 10.78px;">1</div>
<div style="left:708px;top:439px;width:58px;height:16px;background:#C9D6CB"></div>
<div style="left:766px;top:439px;width:1px;height:17px;background:#808080"></div>
<div class="t s" style="right:332px;top:440.22px;font-size:10.9px;line-height:14px;color:#000;transform:scaleY(1.1);transform-origin:0 10.78px;">$24.00</div>
<div style="left:767px;top:439px;width:63px;height:16px;background:#C9D6CB"></div>
<div style="left:830px;top:439px;width:1px;height:17px;background:#808080"></div>
<div class="t s" style="right:268px;top:440.22px;font-size:10.9px;line-height:14px;color:#000;transform:scaleY(1.1);transform-origin:0 10.78px;">$74.68</div>
<div style="left:831px;top:439px;width:56px;height:16px;background:#C9D6CB"></div>
<div style="left:887px;top:439px;width:1px;height:17px;background:#808080"></div>
<div class="t s" style="right:211px;top:440.22px;font-size:10.9px;line-height:14px;color:#000;transform:scaleY(1.1);transform-origin:0 10.78px;">1</div>
<div style="left:888px;top:439px;width:52px;height:16px;background:#C9D6CB"></div>
<div style="left:940px;top:439px;width:1px;height:17px;background:#808080"></div>
<div class="t s" style="right:158px;top:440.22px;font-size:10.9px;line-height:14px;color:#000;transform:scaleY(1.1);transform-origin:0 10.78px;">1</div>
<div style="left:941px;top:439px;width:72px;height:16px;background:#fff"></div>
<div style="left:1013px;top:439px;width:1px;height:17px;background:#808080"></div>
<div class="t s" style="right:85px;top:440.22px;font-size:10.9px;line-height:14px;color:#000;transform:scaleY(1.1);transform-origin:0 10.78px;">$24.00</div>
<div style="left:1014px;top:439px;width:38px;height:16px;background:#fff"></div>
<div style="left:54px;top:455px;width:998px;height:1px;background:#808080"></div>
<div style="left:54px;top:456px;width:998px;height:16px;background:#D4D0C8"></div>
<div style="left:56px;top:458px;width:12px;height:12px;background:#D4D0C8;box-shadow:inset -1px -1px #404040,inset 1px 1px #fff,inset -2px -2px #808080;"></div>
<div style="left:59px;top:463px;width:5px;height:1px;background:#000"></div>
<div class="t s" style="left:73px;top:457.79px;font-size:10.7px;line-height:13px;color:#000;transform:scaleY(1.1);transform-origin:0 10.21px;">Reference : 08267304  $126.10</div>
<div style="left:69px;top:472px;width:983px;height:1px;background:#808080"></div>
<div style="left:54px;top:472px;width:15px;height:1px;background:#D4D0C8"></div>
<div style="left:54px;top:473px;width:15px;height:17px;background:#D4D0C8"></div>
<div style="left:69px;top:473px;width:1px;height:16px;background:#808080"></div>
<div style="left:70px;top:473px;width:83px;height:16px;background:#C9D6CB"></div>
<div style="left:153px;top:473px;width:1px;height:17px;background:#808080"></div>
<div class="t s" style="left:72.5px;top:474.22px;font-size:10.9px;line-height:14px;color:#000;transform:scaleY(1.1);transform-origin:0 10.78px;letter-spacing:0.55px;">9/30/2015</div>
<div style="left:154px;top:473px;width:152px;height:16px;background:#C9D6CB"></div>
<div style="left:306px;top:473px;width:1px;height:17px;background:#808080"></div>
<div class="t s" style="left:156.5px;top:474.22px;font-size:10.9px;line-height:14px;color:#000;transform:scaleY(1.1);transform-origin:0 10.78px;">08267304</div>
<div style="left:307px;top:473px;width:115px;height:16px;background:#fff"></div>
<div style="left:422px;top:473px;width:1px;height:17px;background:#808080"></div>
<div class="t s" style="left:309.5px;top:474.22px;font-size:10.9px;line-height:14px;color:#000;transform:scaleY(1.1);transform-origin:0 10.78px;">1088-03</div>
<div style="left:423px;top:473px;width:226px;height:16px;background:#fff"></div>
<div style="left:649px;top:473px;width:1px;height:17px;background:#808080"></div>
<div class="t s" style="left:425.5px;top:474.88px;font-size:10.45px;line-height:13px;color:#000;transform:scaleY(1.1);transform-origin:0 10.12px;">Brake Pad Set Ceramic - With Shims</div>
<div style="left:650px;top:473px;width:57px;height:16px;background:#fff"></div>
<div style="left:707px;top:473px;width:1px;height:17px;background:#808080"></div>
<div class="t s" style="right:391px;top:474.22px;font-size:10.9px;line-height:14px;color:#000;transform:scaleY(1.1);transform-origin:0 10.78px;">1</div>
<div style="left:708px;top:473px;width:58px;height:16px;background:#C9D6CB"></div>
<div style="left:766px;top:473px;width:1px;height:17px;background:#808080"></div>
<div class="t s" style="right:332px;top:474.22px;font-size:10.9px;line-height:14px;color:#000;transform:scaleY(1.1);transform-origin:0 10.78px;">$26.00</div>
<div style="left:767px;top:473px;width:63px;height:16px;background:#C9D6CB"></div>
<div style="left:830px;top:473px;width:1px;height:17px;background:#808080"></div>
<div class="t s" style="right:268px;top:474.22px;font-size:10.9px;line-height:14px;color:#000;transform:scaleY(1.1);transform-origin:0 10.78px;">$79.98</div>
<div style="left:831px;top:473px;width:56px;height:16px;background:#C9D6CB"></div>
<div style="left:887px;top:473px;width:1px;height:17px;background:#808080"></div>
<div class="t s" style="right:211px;top:474.22px;font-size:10.9px;line-height:14px;color:#000;transform:scaleY(1.1);transform-origin:0 10.78px;">1</div>
<div style="left:888px;top:473px;width:52px;height:16px;background:#C9D6CB"></div>
<div style="left:940px;top:473px;width:1px;height:17px;background:#808080"></div>
<div class="t s" style="right:158px;top:474.22px;font-size:10.9px;line-height:14px;color:#000;transform:scaleY(1.1);transform-origin:0 10.78px;">1</div>
<div style="left:941px;top:473px;width:72px;height:16px;background:#fff"></div>
<div style="left:1013px;top:473px;width:1px;height:17px;background:#808080"></div>
<div class="t s" style="right:85px;top:474.22px;font-size:10.9px;line-height:14px;color:#000;transform:scaleY(1.1);transform-origin:0 10.78px;">$26.00</div>
<div style="left:1014px;top:473px;width:38px;height:16px;background:#fff"></div>
<div style="left:69px;top:489px;width:983px;height:1px;background:#808080"></div>
<div style="left:54px;top:490px;width:15px;height:17px;background:#D4D0C8"></div>
<div style="left:69px;top:490px;width:1px;height:16px;background:#808080"></div>
<div style="left:70px;top:490px;width:83px;height:16px;background:#C9D6CB"></div>
<div style="left:153px;top:490px;width:1px;height:17px;background:#808080"></div>
<div class="t s" style="left:72.5px;top:491.22px;font-size:10.9px;line-height:14px;color:#000;transform:scaleY(1.1);transform-origin:0 10.78px;letter-spacing:0.55px;">9/30/2015</div>
<div style="left:154px;top:490px;width:152px;height:16px;background:#C9D6CB"></div>
<div style="left:306px;top:490px;width:1px;height:17px;background:#808080"></div>
<div class="t s" style="left:156.5px;top:491.22px;font-size:10.9px;line-height:14px;color:#000;transform:scaleY(1.1);transform-origin:0 10.78px;">08267304</div>
<div style="left:307px;top:490px;width:115px;height:16px;background:#fff"></div>
<div style="left:422px;top:490px;width:1px;height:17px;background:#808080"></div>
<div class="t s" style="left:309.5px;top:491.22px;font-size:10.9px;line-height:14px;color:#000;transform:scaleY(1.1);transform-origin:0 10.78px;">1089-03</div>
<div style="left:423px;top:490px;width:226px;height:16px;background:#fff"></div>
<div style="left:649px;top:490px;width:1px;height:17px;background:#808080"></div>
<div class="t s" style="left:425.5px;top:491.88px;font-size:10.45px;line-height:13px;color:#000;transform:scaleY(1.1);transform-origin:0 10.12px;">Brake Pad Set Ceramic - With Shims</div>
<div style="left:650px;top:490px;width:57px;height:16px;background:#fff"></div>
<div style="left:707px;top:490px;width:1px;height:17px;background:#808080"></div>
<div class="t s" style="right:391px;top:491.22px;font-size:10.9px;line-height:14px;color:#000;transform:scaleY(1.1);transform-origin:0 10.78px;">1</div>
<div style="left:708px;top:490px;width:58px;height:16px;background:#C9D6CB"></div>
<div style="left:766px;top:490px;width:1px;height:17px;background:#808080"></div>
<div class="t s" style="right:332px;top:491.22px;font-size:10.9px;line-height:14px;color:#000;transform:scaleY(1.1);transform-origin:0 10.78px;">$26.00</div>
<div style="left:767px;top:490px;width:63px;height:16px;background:#C9D6CB"></div>
<div style="left:830px;top:490px;width:1px;height:17px;background:#808080"></div>
<div class="t s" style="right:268px;top:491.22px;font-size:10.9px;line-height:14px;color:#000;transform:scaleY(1.1);transform-origin:0 10.78px;">$79.98</div>
<div style="left:831px;top:490px;width:56px;height:16px;background:#C9D6CB"></div>
<div style="left:887px;top:490px;width:1px;height:17px;background:#808080"></div>
<div class="t s" style="right:211px;top:491.22px;font-size:10.9px;line-height:14px;color:#000;transform:scaleY(1.1);transform-origin:0 10.78px;">1</div>
<div style="left:888px;top:490px;width:52px;height:16px;background:#C9D6CB"></div>
<div style="left:940px;top:490px;width:1px;height:17px;background:#808080"></div>
<div class="t s" style="right:158px;top:491.22px;font-size:10.9px;line-height:14px;color:#000;transform:scaleY(1.1);transform-origin:0 10.78px;">1</div>
<div style="left:941px;top:490px;width:72px;height:16px;background:#fff"></div>
<div style="left:1013px;top:490px;width:1px;height:17px;background:#808080"></div>
<div class="t s" style="right:85px;top:491.22px;font-size:10.9px;line-height:14px;color:#000;transform:scaleY(1.1);transform-origin:0 10.78px;">$26.00</div>
<div style="left:1014px;top:490px;width:38px;height:16px;background:#fff"></div>
<div style="left:69px;top:506px;width:983px;height:1px;background:#808080"></div>
<div style="left:54px;top:507px;width:15px;height:17px;background:#D4D0C8"></div>
<div style="left:69px;top:507px;width:1px;height:16px;background:#808080"></div>
<div style="left:70px;top:507px;width:83px;height:16px;background:#C9D6CB"></div>
<div style="left:153px;top:507px;width:1px;height:17px;background:#808080"></div>
<div class="t s" style="left:72.5px;top:508.22px;font-size:10.9px;line-height:14px;color:#000;transform:scaleY(1.1);transform-origin:0 10.78px;letter-spacing:0.55px;">9/30/2015</div>
<div style="left:154px;top:507px;width:152px;height:16px;background:#C9D6CB"></div>
<div style="left:306px;top:507px;width:1px;height:17px;background:#808080"></div>
<div class="t s" style="left:156.5px;top:508.22px;font-size:10.9px;line-height:14px;color:#000;transform:scaleY(1.1);transform-origin:0 10.78px;">08267304</div>
<div style="left:307px;top:507px;width:115px;height:16px;background:#fff"></div>
<div style="left:422px;top:507px;width:1px;height:17px;background:#808080"></div>
<div class="t s" style="left:309.5px;top:508.22px;font-size:10.9px;line-height:14px;color:#000;transform:scaleY(1.1);transform-origin:0 10.78px;">42510-SHJ-A00</div>
<div style="left:423px;top:507px;width:226px;height:16px;background:#fff"></div>
<div style="left:649px;top:507px;width:1px;height:17px;background:#808080"></div>
<div class="t s" style="left:425.5px;top:508.88px;font-size:10.45px;line-height:13px;color:#000;transform:scaleY(1.1);transform-origin:0 10.12px;">Brake Disc Coated</div>
<div style="left:650px;top:507px;width:57px;height:16px;background:#fff"></div>
<div style="left:707px;top:507px;width:1px;height:17px;background:#808080"></div>
<div class="t s" style="right:391px;top:508.22px;font-size:10.9px;line-height:14px;color:#000;transform:scaleY(1.1);transform-origin:0 10.78px;">2</div>
<div style="left:708px;top:507px;width:58px;height:16px;background:#C9D6CB"></div>
<div style="left:766px;top:507px;width:1px;height:17px;background:#808080"></div>
<div class="t s" style="right:332px;top:508.22px;font-size:10.9px;line-height:14px;color:#000;transform:scaleY(1.1);transform-origin:0 10.78px;">$37.05</div>
<div style="left:767px;top:507px;width:63px;height:16px;background:#C9D6CB"></div>
<div style="left:830px;top:507px;width:1px;height:17px;background:#808080"></div>
<div class="t s" style="right:268px;top:508.22px;font-size:10.9px;line-height:14px;color:#000;transform:scaleY(1.1);transform-origin:0 10.78px;">$199.60</div>
<div style="left:831px;top:507px;width:56px;height:16px;background:#C9D6CB"></div>
<div style="left:887px;top:507px;width:1px;height:17px;background:#808080"></div>
<div class="t s" style="right:211px;top:508.22px;font-size:10.9px;line-height:14px;color:#000;transform:scaleY(1.1);transform-origin:0 10.78px;">2</div>
<div style="left:888px;top:507px;width:52px;height:16px;background:#C9D6CB"></div>
<div style="left:940px;top:507px;width:1px;height:17px;background:#808080"></div>
<div class="t s" style="right:158px;top:508.22px;font-size:10.9px;line-height:14px;color:#000;transform:scaleY(1.1);transform-origin:0 10.78px;">2</div>
<div style="left:941px;top:507px;width:72px;height:16px;background:#fff"></div>
<div style="left:1013px;top:507px;width:1px;height:17px;background:#808080"></div>
<div class="t s" style="right:85px;top:508.22px;font-size:10.9px;line-height:14px;color:#000;transform:scaleY(1.1);transform-origin:0 10.78px;">$74.10</div>
<div style="left:1014px;top:507px;width:38px;height:16px;background:#fff"></div>
<div style="left:69px;top:523px;width:983px;height:1px;background:#808080"></div>
<div style="left:54px;top:523px;width:15px;height:1px;background:#fff"></div>
</div>
<div style="left:54px;top:597px;width:998px;height:16px;background:#eaeaea;border-top:1px solid #e2e2e2;border-bottom:1px solid #f2f2f2"></div>
<svg style="left:60px;top:601px" width="5" height="8"><path d="M4.5 0v8L0.5 4z" fill="#505050"/></svg>
<svg style="left:1042px;top:601px" width="5" height="8"><path d="M0.5 0v8L4.5 4z" fill="#505050"/></svg>
<div style="left:72px;top:597px;width:850px;height:15px;border:1px solid #959595;border-radius:3px;background:linear-gradient(180deg,#f6f6f6 0%,#ededed 45%,#dcdcdc 50%,#cdcdd2 100%)"></div>
<svg style="left:492px;top:601px" width="9" height="7"><path d="M1.5 0v7M4.5 0v7M7.5 0v7" stroke="#4a4a4a" stroke-width="1"/></svg>
<div style="left:53px;top:613px;width:1000px;height:37px;border-top:1px solid #fff;border-left:1px solid #fff;border-bottom:1px solid #808080;border-right:1px solid #808080;background:#D4D0C8"></div>
<div style="left:966px;top:616px;width:86px;height:32px;background:#D4D0C8;box-shadow:inset -1px -1px #404040,inset 1px 1px #fff,inset -2px -2px #808080;"></div>
<svg style="left:987px;top:624px" width="16" height="16" viewBox="0 0 16 16"><path d="M2.8 2.8L12.5 14M12.5 2L2.5 14" stroke="#8a0000" stroke-width="3" stroke-linecap="round"/><path d="M2 13.5L5 10M2.5 2.5L5 5.2" stroke="#ff1818" stroke-width="1.2"/></svg>
<div class="t s" style="left:1007.5px;top:626.86px;font-size:10.5px;line-height:13px;color:#000;transform:scaleY(1.1);transform-origin:0 10.14px;"><u>C</u>lose</div>
<div class="t" style="left:12.5px;top:12.50px;font-size:13px;line-height:16px;color:#1f1f1f;">Return Bin checkbox</div>
<div class="t" style="left:366px;top:12.50px;font-size:13px;line-height:16px;color:#1f1f1f;">Action buttons</div>
<div class="t" style="left:814px;top:12.50px;font-size:13px;line-height:16px;color:#1f1f1f;">Returns button</div>
<div class="t" style="left:320px;top:68.67px;font-size:12.5px;line-height:16px;color:#1f1f1f;">Vendor</div>
<div class="t" style="left:594.5px;top:63.67px;font-size:12.5px;line-height:16px;color:#1f1f1f;">Date Range</div>
<div class="t" style="left:967.5px;top:63.50px;font-size:13px;line-height:16px;color:#1f1f1f;">Expand and Flatten</div>
<svg style="left:0;top:0" width="1096" height="668">
<line x1="82" y1="58" x2="171" y2="174" stroke="#1a8cff" stroke-width="1.15"/>
<line x1="408.5" y1="61" x2="408.5" y2="169" stroke="#1a8cff" stroke-width="1.15"/>
<line x1="865" y1="60" x2="941" y2="170" stroke="#1a8cff" stroke-width="1.15"/>
<line x1="337" y1="117" x2="305.5" y2="274" stroke="#1a8cff" stroke-width="1.15"/>
<line x1="622" y1="112" x2="550.5" y2="251.5" stroke="#1a8cff" stroke-width="1.15"/>
<line x1="1017" y1="111" x2="966.5" y2="229.5" stroke="#1a8cff" stroke-width="1.15"/>
</svg>
<div style="left:58px;top:33px;width:28px;height:28px;border-radius:10px;background:#0A80FF;box-shadow:2px 3px 4px rgba(60,40,20,0.55)"></div>
<div class="t" style="left:58px;top:38.5px;width:28px;text-align:center;font-size:14px;line-height:17px;font-weight:bold;color:#fff;transform:scaleX(0.82)">1</div>
<div style="left:394px;top:33px;width:28px;height:28px;border-radius:10px;background:#0A80FF;box-shadow:2px 3px 4px rgba(60,40,20,0.55)"></div>
<div class="t" style="left:394px;top:38.5px;width:28px;text-align:center;font-size:14px;line-height:17px;font-weight:bold;color:#fff;transform:scaleX(0.82)">2</div>
<div style="left:842px;top:33px;width:28px;height:28px;border-radius:10px;background:#0A80FF;box-shadow:2px 3px 4px rgba(60,40,20,0.55)"></div>
<div class="t" style="left:842px;top:38.5px;width:28px;text-align:center;font-size:14px;line-height:17px;font-weight:bold;color:#fff;transform:scaleX(0.82)">3</div>
<div style="left:325px;top:89px;width:28px;height:28px;border-radius:10px;background:#0A80FF;box-shadow:2px 3px 4px rgba(60,40,20,0.55)"></div>
<div class="t" style="left:325px;top:94.5px;width:28px;text-align:center;font-size:14px;line-height:17px;font-weight:bold;color:#fff;transform:scaleX(0.82)">4</div>
<div style="left:614px;top:84px;width:28px;height:28px;border-radius:10px;background:#0A80FF;box-shadow:2px 3px 4px rgba(60,40,20,0.55)"></div>
<div class="t" style="left:614px;top:89.5px;width:28px;text-align:center;font-size:14px;line-height:17px;font-weight:bold;color:#fff;transform:scaleX(0.82)">5</div>
<div style="left:1009px;top:84px;width:28px;height:28px;border-radius:10px;background:#0A80FF;box-shadow:2px 3px 4px rgba(60,40,20,0.55)"></div>
<div class="t" style="left:1009px;top:89.5px;width:28px;text-align:center;font-size:14px;line-height:17px;font-weight:bold;color:#fff;transform:scaleX(0.82)">6</div>
</body></html>
